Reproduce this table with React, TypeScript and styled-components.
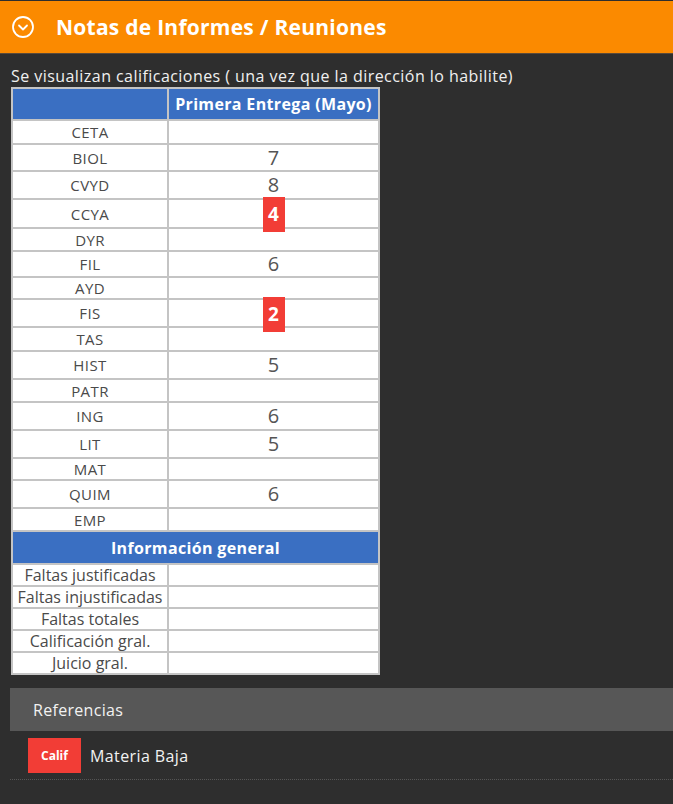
import React from "react";
import styled, { createGlobalStyle } from "styled-components";

const Global = createGlobalStyle`
  html, body { margin: 0; padding: 0; background: #2e2e2e; }
  body { font-family: "Open Sans", "DejaVu Sans", sans-serif; }
`;

const Page = styled.div`
  width: 673px;
  min-height: 804px;
  background: #2e2e2e;
`;

const Header = styled.header`
  height: 52px;
  margin-top: 1px;
  background: #fb8a00;
  border-bottom: 1px solid #5a4a3a;
  display: flex;
  align-items: center;
  padding-left: 11px;
  gap: 21px;
`;

const Title = styled.h1`
  margin: 0;
  color: #fff;
  font-family: "Open Sans", sans-serif;
  font-weight: 700;
  font-size: 21px;
  letter-spacing: 0.25px;
`;

const Body = styled.div`
  padding: 11px 0 0 11px;
`;

const Note = styled.p`
  margin: 0;
  color: #f0f0f0;
  font-size: 16px;
  line-height: 22px;
  letter-spacing: 0.45px;
`;

const Table = styled.table`
  border-collapse: collapse;
  width: 369px;
  background: #fff;
  border: 2px solid #c4c4c4;
  table-layout: fixed;
`;

const HeadCell = styled.th`
  background: #3a6fc2;
  color: #fff;
  font-weight: 700;
  font-size: 16px;
  line-height: 20px;
  height: 30px;
  padding: 0;
  border: 2px solid #c4c4c4;
  letter-spacing: 0.35px;
  white-space: nowrap;
`;

const LabelCell = styled.td<{ $tight?: boolean }>`
  width: 154px;
  text-align: center;
  color: #4a4a4a;
  font-size: ${(p) => (p.$tight ? "16px" : "15px")};
  line-height: 18px;
  padding: 0;
  border: 2px solid #c4c4c4;
  white-space: nowrap;
  overflow: hidden;
  letter-spacing: ${(p) => (p.$tight ? "0px" : "0.4px")};
`;

const Row = styled.tr<{ $h: number }>`
  height: ${(p) => p.$h}px;
`;

const GradeCell = styled.td`
  text-align: center;
  color: #555;
  font-size: 20px;
  line-height: 22px;
  padding: 0;
  border: 2px solid #c4c4c4;
`;

const Badge = styled.span`
  display: inline-block;
  background: #f23d36;
  color: #fff;
  font-weight: 700;
  font-size: 19px;
  width: 22px;
  line-height: 35px;
  margin: -7px 0;
  vertical-align: middle;
`;

const References = styled.section`
  margin-top: 13px;
  margin-left: -1px;
`;

const RefBar = styled.div`
  height: 43px;
  background: #575757;
  display: flex;
  align-items: center;
  padding-left: 23px;
  color: #f2f2f2;
  font-size: 16px;
  letter-spacing: 0.3px;
`;

const RefItem = styled.div`
  display: flex;
  align-items: center;
  gap: 9px;
  padding: 7px 0 6px 18px;
  border-bottom: 1px dotted #555;
`;

const RefBadge = styled.span`
  display: inline-flex;
  align-items: center;
  justify-content: center;
  width: 53px;
  height: 35px;
  background: #f23d36;
  color: #fff;
  font-weight: 700;
  font-size: 12px;
`;

const RefText = styled.span`
  color: #f2f2f2;
  font-size: 16px;
  letter-spacing: 0.4px;
`;

const ChevronCircle = () => (
  <svg width="24" height="24" viewBox="0 0 24 24" fill="none" stroke="#fff" strokeWidth="1.8" strokeLinecap="round" strokeLinejoin="round">
    <circle cx="12" cy="12" r="10" />
    <path d="M8 10.5l4 4 4-4" />
  </svg>
);

type Subject = { name: string; grade?: number; low?: boolean; h: number };

const subjects: Subject[] = [
  { name: "CETA", h: 24 },
  { name: "BIOL", grade: 7, h: 27 },
  { name: "CVYD", grade: 8, h: 28 },
  { name: "CCYA", grade: 4, low: true, h: 29 },
  { name: "DYR", h: 23 },
  { name: "FIL", grade: 6, h: 26 },
  { name: "AYD", h: 22 },
  { name: "FIS", grade: 2, low: true, h: 28 },
  { name: "TAS", h: 24 },
  { name: "HIST", grade: 5, h: 28 },
  { name: "PATR", h: 23 },
  { name: "ING", grade: 6, h: 28 },
  { name: "LIT", grade: 5, h: 28 },
  { name: "MAT", h: 22 },
  { name: "QUIM", grade: 6, h: 28 },
  { name: "EMP", h: 23 },
];

const general = [
  "Faltas justificadas",
  "Faltas injustificadas",
  "Faltas totales",
  "Calificación gral.",
  "Juicio gral.",
];

export default function App() {
  return (
    <Page>
      <Global />
      <Header>
        <ChevronCircle />
        <Title>Notas de Informes / Reuniones</Title>
      </Header>
      <Body>
        <Note>Se visualizan calificaciones ( una vez que la dirección lo habilite)</Note>
        <Table>
          <thead>
            <Row $h={32}>
              <HeadCell style={{ width: 154 }} />
              <HeadCell>Primera Entrega (Mayo)</HeadCell>
            </Row>
          </thead>
          <tbody>
            {subjects.map((s) => (
              <Row key={s.name} $h={s.h}>
                <LabelCell>{s.name}</LabelCell>
                <GradeCell>
                  {s.grade !== undefined ? s.low ? <Badge>{s.grade}</Badge> : s.grade : null}
                </GradeCell>
              </Row>
            ))}
            <Row $h={33}>
              <HeadCell colSpan={2}>Información general</HeadCell>
            </Row>
            {general.map((g) => (
              <Row key={g} $h={22}>
                <LabelCell $tight>{g}</LabelCell>
                <GradeCell />
              </Row>
            ))}
          </tbody>
        </Table>
        <References>
          <RefBar>Referencias</RefBar>
          <RefItem>
            <RefBadge>Calif</RefBadge>
            <RefText>Materia Baja</RefText>
          </RefItem>
        </References>
      </Body>
    </Page>
  );
}
